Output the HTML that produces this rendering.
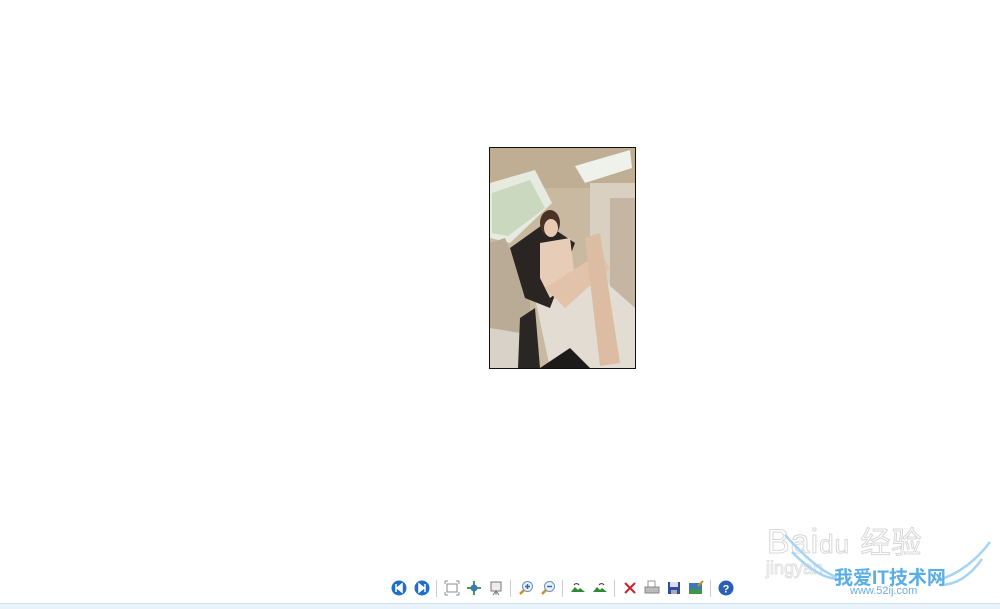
<!DOCTYPE html>
<html><head><meta charset="utf-8"><style>
body{margin:0;width:1000px;height:608px;background:#fff;position:relative;overflow:hidden;font-family:"Liberation Sans","Noto Sans CJK SC",sans-serif}
.photo{position:absolute;left:489px;top:147px;width:145px;height:220px;border:1px solid #111}
.bar{position:absolute;left:0;top:603px;width:1000px;height:5px;background:#e8f2fa;border-top:1px solid #cfe3f3}
.tb{position:absolute;top:580px;left:391px;height:16px}
.i{position:absolute;top:0;width:16px;height:16px}
.sep{position:absolute;top:0;width:1px;height:17px;background:#ccc}
</style></head><body>
<svg class="photo" viewBox="0 0 145 220" preserveAspectRatio="none">
<rect width="145" height="220" fill="#c9b9a0"/>
<rect x="0" y="0" width="145" height="40" fill="#bfae93"/>
<polygon points="0,35 45,22 62,55 20,95 0,90" fill="#e6eadf"/>
<polygon points="2,45 40,32 55,60 18,88 2,85" fill="#c9d8bf"/>
<polygon points="85,18 140,2 142,20 95,35" fill="#eef2ea"/>
<rect x="100" y="35" width="45" height="140" fill="#d9d0c2"/>
<rect x="120" y="50" width="25" height="120" fill="#c4b6a2"/>
<polygon points="0,95 15,90 40,150 40,220 0,220" fill="#b9ab95"/>
<polygon points="0,180 30,185 35,220 0,220" fill="#d8d2c8"/>
<polygon points="30,170 45,160 50,220 28,220" fill="#2a2623"/>
<polygon points="45,150 100,120 145,160 145,220 60,220" fill="#e2dcd2"/>
<polygon points="20,100 55,75 85,95 60,160 35,150" fill="#2a2522"/>
<ellipse cx="60" cy="75" rx="10" ry="13" fill="#4a3226"/>
<ellipse cx="61" cy="80" rx="7" ry="9" fill="#e8c9b2"/>
<polygon points="50,95 80,90 85,130 60,150 50,130" fill="#e7cdb8"/>
<polygon points="55,140 110,105 120,120 75,160" fill="#e2c2a8"/>
<polygon points="95,90 110,85 130,215 110,218" fill="#dcbca2"/>
<polygon points="50,220 80,200 100,220" fill="#1d1b1a"/>
</svg>

<div class="tb">
<svg class="i" style="left:0" viewBox="0 0 16 16"><circle cx="8" cy="8" r="7.5" fill="#1f6fc6"/><path d="M5 4v8M11 4L6 8l5 4z" stroke="#fff" fill="#fff" stroke-width="1.5"/></svg>
<svg class="i" style="left:23px" viewBox="0 0 16 16"><circle cx="8" cy="8" r="7.5" fill="#1f6fc6"/><path d="M11 4v8M5 4l5 4-5 4z" stroke="#fff" fill="#fff" stroke-width="1.5"/></svg>
<div class="sep" style="left:45px"></div>
<svg class="i" style="left:53px" viewBox="0 0 16 16"><rect x="3" y="4" width="10" height="8" fill="none" stroke="#889" stroke-width="1"/><path d="M1 1h3M1 1v3M15 1h-3M15 1v3M1 15h3M1 15v-3M15 15h-3M15 15v-3" stroke="#889"/></svg>
<svg class="i" style="left:75px" viewBox="0 0 16 16"><path d="M8 1v14M1 8h14" stroke="#4a9a4a" stroke-width="2"/><circle cx="8" cy="8" r="3.5" fill="#3a7ab8"/></svg>
<svg class="i" style="left:97px" viewBox="0 0 16 16"><rect x="3" y="2" width="10" height="9" fill="#eee" stroke="#777"/><path d="M8 11v4M5 15l3-4 3 4" stroke="#777" fill="none"/></svg>
<div class="sep" style="left:119px"></div>
<svg class="i" style="left:127px" viewBox="0 0 16 16"><circle cx="9.5" cy="6.5" r="5" fill="#e8f0fa" stroke="#6a8fbf"/><path d="M2 14l4-4" stroke="#c8902a" stroke-width="2.5"/><path d="M7 6.5h5M9.5 4v5" stroke="#2b6bb3" stroke-width="1.5"/></svg>
<svg class="i" style="left:149px" viewBox="0 0 16 16"><circle cx="9.5" cy="6.5" r="5" fill="#e8f0fa" stroke="#6a8fbf"/><path d="M2 14l4-4" stroke="#c8902a" stroke-width="2.5"/><path d="M7 6.5h5" stroke="#2b6bb3" stroke-width="1.5"/></svg>
<div class="sep" style="left:171px"></div>
<svg class="i" style="left:179px" viewBox="0 0 16 16"><path d="M1 12l4-5 3 3 2-2 5 4z" fill="#2d8a2d"/><path d="M4 5a3 3 0 0 1 5 0" stroke="#333" fill="none"/></svg>
<svg class="i" style="left:201px" viewBox="0 0 16 16"><path d="M1 12l4-5 3 3 2-2 5 4z" fill="#2d8a2d"/><path d="M7 5a3 3 0 0 1 5 0" stroke="#333" fill="none"/></svg>
<div class="sep" style="left:223px"></div>
<svg class="i" style="left:231px" viewBox="0 0 16 16"><path d="M3 3l10 10M13 3L3 13" stroke="#d0202a" stroke-width="2"/></svg>
<svg class="i" style="left:253px" viewBox="0 0 16 16"><rect x="4" y="1" width="7" height="6" fill="#fff" stroke="#999"/><rect x="1" y="7" width="14" height="6" fill="#bbb" stroke="#888"/></svg>
<svg class="i" style="left:275px" viewBox="0 0 16 16"><rect x="2" y="2" width="12" height="12" fill="#2b4f9e"/><rect x="4" y="2" width="8" height="5" fill="#dde"/><rect x="5" y="10" width="6" height="4" fill="#aab"/></svg>
<svg class="i" style="left:297px" viewBox="0 0 16 16"><rect x="1" y="3" width="13" height="11" fill="#3a7ab8"/><path d="M1 12l4-4 3 3 3-3 3 4v2H1z" fill="#3c9a3c"/><path d="M10 6l5-5" stroke="#c8902a" stroke-width="2"/></svg>
<div class="sep" style="left:319px"></div>
<svg class="i" style="left:327px" viewBox="0 0 16 16"><circle cx="8" cy="8" r="7.5" fill="#2b5fb3"/><text x="8" y="12.5" font-size="11" font-weight="bold" fill="#fff" text-anchor="middle" font-family="Liberation Sans">?</text></svg>
</div>

<div style="position:absolute;left:767px;top:518px;font-size:34px;color:#fff;-webkit-text-stroke:1px #d8d8d8;letter-spacing:1px">Bai<span style="font-size:26px">du</span> <span style="font-size:30px">经验</span></div>
<div style="position:absolute;left:766px;top:558px;font-size:18px;color:#fff;-webkit-text-stroke:1px #e0e0e0">jingyan</div>
<svg style="position:absolute;left:780px;top:530px" width="220" height="75" viewBox="0 0 220 75"><path d="M5 5c20 22 38 38 52 42M12 22c18 18 32 26 45 27M158 50c22-6 40-22 52-38M160 55c18 0 32-12 42-26" stroke="#a6d4f4" stroke-width="2.5" fill="none"/></svg>
<div style="position:absolute;left:834px;top:563px;font-size:19px;font-weight:bold;color:#5aaee8">我爱IT技术网</div>
<div style="position:absolute;left:850px;top:585px;font-size:11px;color:#6ab0e6">www.52ij.com</div>
<div class="bar"></div>
</body></html>
